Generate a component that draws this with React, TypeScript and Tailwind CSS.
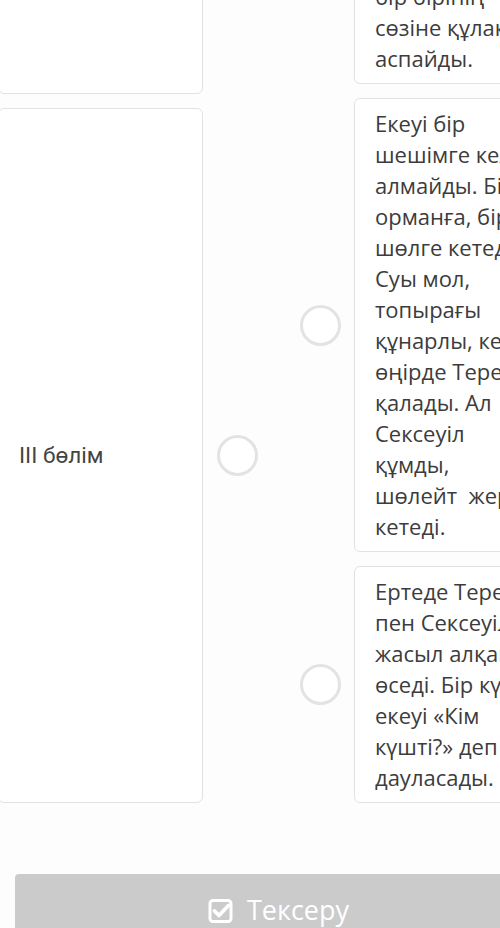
import React from "react";

const rightCards: { lines: string[] }[] = [
  { lines: ["Терек пен", "Сексеуіл", "бір бірінің", "сөзіне құлақ", "аспайды."] },
  {
    lines: [
      "Екеуі бір",
      "шешімге келе",
      "алмайды. Бірі",
      "орманға, бірі",
      "шөлге кетеді.",
      "Суы мол,",
      "топырағы",
      "құнарлы, кең",
      "өңірде Терек",
      "қалады. Ал",
      "Сексеуіл",
      "құмды,",
      "шөлейт  жерге",
      "кетеді.",
    ],
  },
  {
    lines: [
      "Ертеде Терек",
      "пен Сексеуіл",
      "жасыл алқапта",
      "өседі. Бір күні",
      "екеуі «Кім",
      "күшті?» деп",
      "дауласады.",
    ],
  },
];

function Radio() {
  return <span className="block h-[41px] w-[41px] shrink-0 rounded-full border-[3px] border-[#e3e3e3] bg-white" />;
}

function CheckSquareIcon() {
  return (
    <svg width="25" height="27" viewBox="0 0 25 27" fill="none">
      <rect x="2" y="3.5" width="21" height="21" rx="3" stroke="white" strokeWidth="3" />
      <path d="M6.5 14 L11 18.5 L20.5 8.5" stroke="white" strokeWidth="3.8" strokeLinecap="round" strokeLinejoin="round" />
    </svg>
  );
}

export default function App() {
  return (
    <div className="h-[928px] w-[500px] overflow-hidden bg-[#fdfdfd] font-['Open_Sans',sans-serif] text-[#3c3c3c]">
      <div className="-mt-[91px] flex">
        {/* left column */}
        <div className="-ml-[2px] flex w-[205px] shrink-0 flex-col gap-[14px]">
          <div className="h-[185px] rounded-[6px] border border-[#e2e2e2] bg-white" />
          <div className="flex flex-1 items-center rounded-[6px] border border-[#e2e2e2] bg-white pl-[20px] font-['Roboto',sans-serif] text-[22.5px] text-[#444]">
            III бөлім
          </div>
        </div>
        <div className="ml-[14px] flex w-[41px] shrink-0 flex-col gap-[14px]">
          <div className="h-[185px]" />
          <div className="flex flex-1 items-center">
            <Radio />
          </div>
        </div>

        {/* right column */}
        <div className="ml-[42px] flex flex-col gap-[14px]">
          {rightCards.map((card, i) => (
            <div key={i} className="flex items-center gap-[13px]">
              {i === 0 ? <span className="w-[41px] shrink-0" /> : <Radio />}
              <div className="w-[180px] shrink-0 rounded-[6px] border border-[#e2e2e2] bg-white px-[20px] py-[9px] text-[22px] leading-[31px]">
                {card.lines.map((line) => (
                  <div key={line} className="whitespace-pre">
                    {line}
                  </div>
                ))}
              </div>
            </div>
          ))}
        </div>
      </div>

      <div className="mt-[71px] pl-[15px]">
        <button className="flex h-[72px] w-[527px] items-center justify-center gap-[14px] rounded-[4px] bg-[#cbcbcb] text-[27px] text-white">
          <CheckSquareIcon />
          Тексеру
        </button>
      </div>
    </div>
  );
}
